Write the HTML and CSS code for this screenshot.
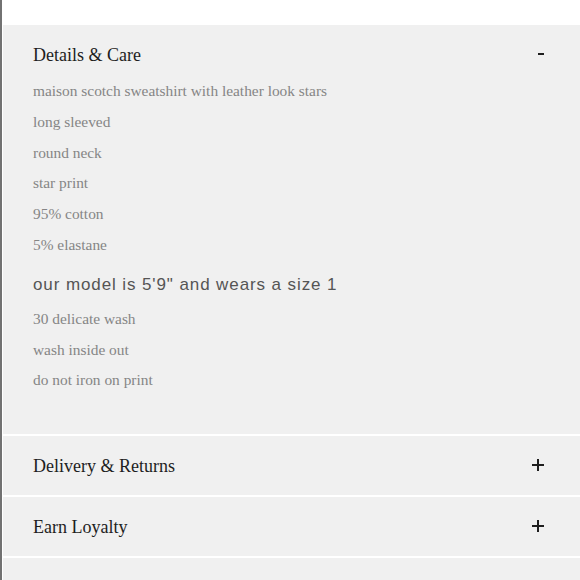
FILE: index.html
```html
<!DOCTYPE html>
<html>
<head>
<meta charset="utf-8">
<link rel="stylesheet" href="styles.css">
</head>
<body>
<div class="page">
  <section class="acc acc-open">
    <div class="acc-head">
      <span class="acc-title">Details &amp; Care</span>
      <svg class="acc-icon" width="12" height="12" viewBox="0 0 12 12"><rect x="6" y="4" width="6" height="2" fill="#1e1e1e"/></svg>
    </div>
    <div class="acc-body">
      <p class="item">maison scotch sweatshirt with leather look stars</p>
      <p class="item">long sleeved</p>
      <p class="item">round neck</p>
      <p class="item">star print</p>
      <p class="item">95% cotton</p>
      <p class="item">5% elastane</p>
      <p class="model">our model is 5'9" and wears a size 1</p>
      <p class="item">30 delicate wash</p>
      <p class="item">wash inside out</p>
      <p class="item">do not iron on print</p>
    </div>
  </section>
  <section class="acc">
    <div class="acc-head">
      <span class="acc-title">Delivery &amp; Returns</span>
      <svg class="acc-icon plus" width="12" height="12" viewBox="0 0 12 12"><rect x="0" y="5" width="12" height="2" fill="#1e1e1e"/><rect x="5" y="0" width="2" height="12" fill="#1e1e1e"/></svg>
    </div>
  </section>
  <section class="acc">
    <div class="acc-head">
      <span class="acc-title">Earn Loyalty</span>
      <svg class="acc-icon plus" width="12" height="12" viewBox="0 0 12 12"><rect x="0" y="5" width="12" height="2" fill="#1e1e1e"/><rect x="5" y="0" width="2" height="12" fill="#1e1e1e"/></svg>
    </div>
  </section>
  <div class="rest"></div>
</div>
</body>
</html>
```

FILE: styles.css
```css
html, body {
  margin: 0;
  padding: 0;
  background: #ffffff;
  height: 100%;
}
.page {
  box-sizing: border-box;
  min-height: 100%;
  border-left: 2px solid #727272;
  padding-top: 25px;
  padding-left: 1px;
  display: flex;
  flex-direction: column;
}
.acc {
  background: #f0f0f0;
  border-bottom: 2px solid #ffffff;
}
.acc-head {
  display: flex;
  justify-content: space-between;
  align-items: center;
  padding: 18px 36px 17px 30px;
  line-height: 24px;
}
.acc-open .acc-head {
  padding-bottom: 9px;
}
.acc-title {
  font-family: "Liberation Serif", "Times New Roman", serif;
  font-size: 18px;
  color: #1e1e1e;
}
.acc-icon {
  display: block;
  margin-top: -3px;
}
.acc-open .acc-icon {
  margin-top: 0;
}
.acc-body {
  padding: 0 36px 38px 30px;
}
.item {
  margin: 0;
  font-family: "Liberation Serif", "Times New Roman", serif;
  font-size: 15.4px;
  line-height: 30.8px;
  color: #858585;
}
.model {
  margin: 0;
  padding-top: 5px;
  font-family: "Liberation Sans", Arial, sans-serif;
  font-size: 17px;
  line-height: 38px;
  letter-spacing: 0.9px;
  color: #555555;
}
.rest {
  flex: 1;
  background: #f0f0f0;
}
```
